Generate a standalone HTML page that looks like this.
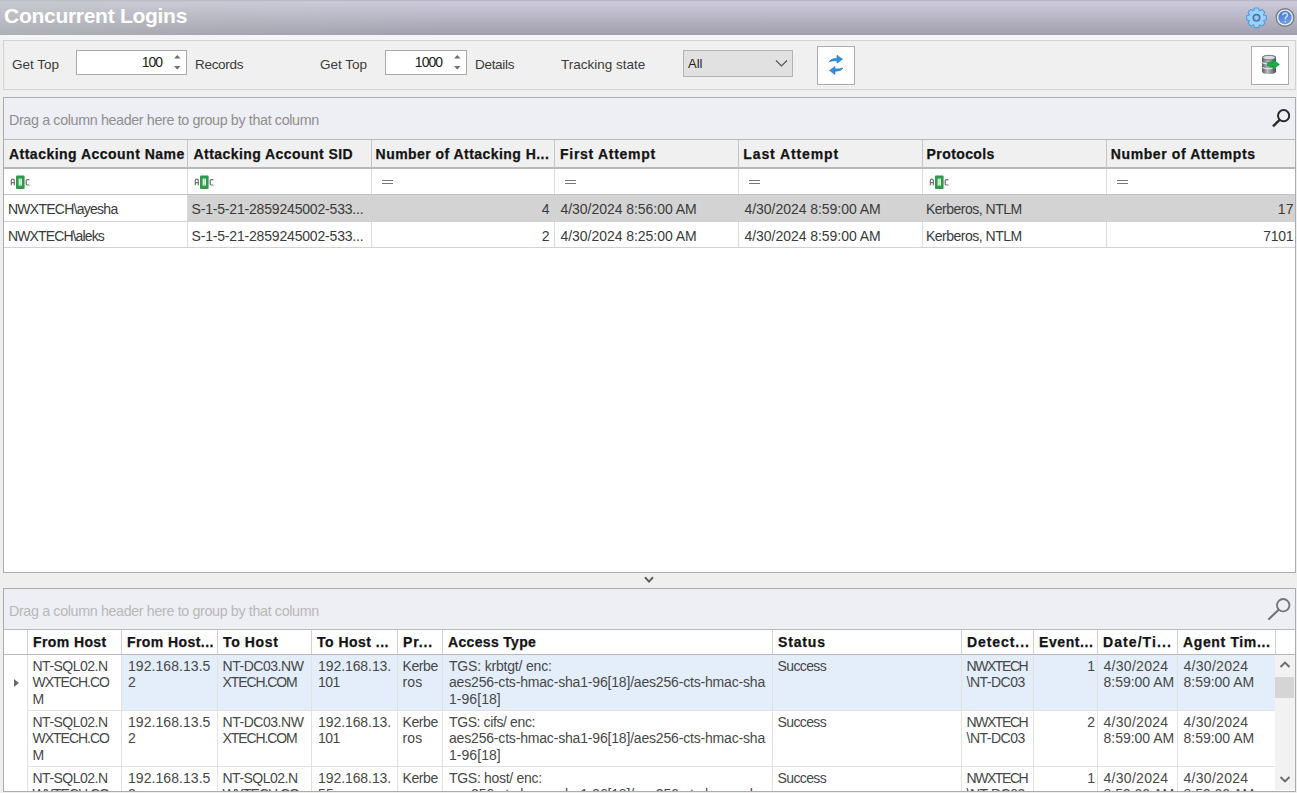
<!DOCTYPE html><html><head><meta charset="utf-8"><style>*{margin:0;padding:0;box-sizing:border-box}
html,body{width:1297px;height:793px;overflow:hidden;background:#efefef;font-family:"Liberation Sans",sans-serif}
.a{position:absolute}
#title{left:0;top:0;width:1297px;height:35px;background:linear-gradient(to right,rgba(190,198,192,0.45) 0,rgba(190,198,192,0.2) 200px,rgba(190,198,192,0) 450px),linear-gradient(#b3b2c0 0,#cccada 2px,#bdbbcb 14px,#a2a0ae 34px)}
#title .t{left:4px;top:4px;font-size:21px;letter-spacing:-0.28px;font-weight:bold;color:#fff;white-space:nowrap}
#strip{left:0;top:35px;width:1297px;height:5px;background:#f5f5f8}
#tb{left:3px;top:40px;width:1293px;height:50px;border:1px solid #d2d2d2;background:#f0f0f0}
.lbl{position:absolute;font-size:13.5px;color:#3a3a3a;white-space:nowrap}
.spin{position:absolute;background:#fff;border:1px solid #a9a9a9;height:25px}
.spin .v{position:absolute;right:24px;top:3px;font-size:14px;letter-spacing:-1px;color:#222}
.btn{position:absolute;background:#fff;border:1px solid #acacac;width:38px;height:39px}
.grid{position:absolute;border:1px solid #acacac;background:#fff}
.grp{position:absolute;background:#eeeef5}
.gt{position:absolute;left:5px;font-size:14.3px;letter-spacing:-0.36px;color:#9a9a9a;white-space:nowrap}
.h{position:absolute;font-size:14px;font-weight:bold;letter-spacing:0.4px;color:#141414;white-space:nowrap;overflow:hidden}
.d{position:absolute;font-size:13px;color:#3c3c3c;white-space:nowrap}
.d2{position:absolute;font-size:13.4px;line-height:16.3px;color:#555;white-space:pre}
.h2{position:absolute;font-size:14px;font-weight:bold;letter-spacing:0.3px;color:#141414;white-space:nowrap}
.abc{height:14px;font-size:0;white-space:nowrap}
.abc .l{display:inline-block;vertical-align:top;margin-top:3.5px;font-family:"Liberation Mono",monospace;font-size:8.5px;line-height:7px;color:#6a6a6a;font-weight:bold;width:4.5px;overflow:visible}
.abc .b{display:inline-block;vertical-align:top;width:9px;height:14px;background:#2d9b4c;margin:0 1px 0 0.5px;position:relative;border-radius:1px}
.abc .b i{position:absolute;left:3px;top:4px;width:3px;height:6px;background:#d8f0de}
.eq{width:11px;height:4px;border-top:1px solid #777;border-bottom:1px solid #777}
.tx{position:absolute;white-space:pre;line-height:normal}
</style></head><body>
<div id="title" class="a"><div class="a t">Concurrent Logins</div>
<svg class="a" style="left:1245px;top:6px" width="23" height="23" viewBox="0 0 23 23">
<path d="M8.61 4.77 L9.51 2.00 L13.49 2.00 L14.39 4.77 L14.43 4.79 L17.03 3.47 L19.83 6.27 L18.51 8.87 L18.53 8.91 L21.30 9.81 L21.30 13.79 L18.53 14.69 L18.51 14.73 L19.83 17.33 L17.03 20.13 L14.43 18.81 L14.39 18.83 L13.49 21.60 L9.51 21.60 L8.61 18.83 L8.57 18.81 L5.97 20.13 L3.17 17.33 L4.49 14.73 L4.47 14.69 L1.70 13.79 L1.70 9.81 L4.47 8.91 L4.49 8.87 L3.17 6.27 L5.97 3.47 L8.57 4.79 Z" fill="#9dd2f6" stroke="#4d9be0" stroke-width="1.1" stroke-linejoin="round"/>
<circle cx="11.5" cy="11.8" r="3.2" fill="#a9c4e2" stroke="#3b7cc4" stroke-width="1.7"/>
</svg>
<svg class="a" style="left:1274px;top:7px" width="22" height="22" viewBox="0 0 22 22">
<defs><linearGradient id="hb" x1="0" y1="0" x2="0.3" y2="1"><stop offset="0" stop-color="#3f73d4"/><stop offset="1" stop-color="#6f9be6"/></linearGradient></defs>
<circle cx="11" cy="10.5" r="9.5" fill="#777b7e"/>
<circle cx="11" cy="10.5" r="8.1" fill="#eaf0f8"/>
<circle cx="11" cy="10.5" r="6.7" fill="url(#hb)"/>
<path d="M8.6 8.3 Q8.8 5.9 11.2 5.9 Q13.5 6 13.4 8.1 Q13.3 9.5 11.6 10.4 L11.3 12.3" fill="none" stroke="#c9dbf8" stroke-width="1.5"/>
<circle cx="11.3" cy="14.6" r="0.95" fill="#c9dbf8"/>
</svg>
</div>
<div id="strip" class="a"></div>
<div id="tb" class="a"></div>
<div class="lbl" style="left:12px;top:57px">Get Top</div>
<div class="spin" style="left:76px;top:50px;width:111px"><div class="v">100</div>
<svg class="a" style="left:96px;top:3px" width="9" height="17" viewBox="0 0 9 17"><path d="M1 4.6 L4.3 1 L7.6 4.6 Z" fill="#707070"/><path d="M1 12 L4.3 15.6 L7.6 12 Z" fill="#707070"/></svg></div>
<div class="lbl" style="left:195px;top:57px;letter-spacing:-0.3px">Records</div>
<div class="lbl" style="left:320px;top:57px">Get Top</div>
<div class="spin" style="left:385px;top:50px;width:82px"><div class="v">1000</div>
<svg class="a" style="left:67px;top:3px" width="9" height="17" viewBox="0 0 9 17"><path d="M1 4.6 L4.3 1 L7.6 4.6 Z" fill="#707070"/><path d="M1 12 L4.3 15.6 L7.6 12 Z" fill="#707070"/></svg></div>
<div class="lbl" style="left:475px;top:57px;letter-spacing:-0.3px">Details</div>
<div class="lbl" style="left:561px;top:57px">Tracking state</div>
<div class="a" style="left:683px;top:50px;width:110px;height:27px;background:#e1e1e1;border:1px solid #b4b4b4"></div>
<div class="a" style="left:688px;top:56px;font-size:13px;color:#1e1e1e">All</div>
<svg class="a" style="left:775px;top:59px" width="13" height="9" viewBox="0 0 13 9"><path d="M1 1.5 L6.5 7 L12 1.5" fill="none" stroke="#555" stroke-width="1.2"/></svg>
<div class="btn" style="left:817px;top:46px"></div>
<svg class="a" style="left:826px;top:53px" width="20" height="24" viewBox="0 0 20 24">
<path transform="translate(0,-0.8)" d="M3 9.5 Q5 6 11 6.2 L11 3 L16.5 7 L11 11 L11 8.6 Q6.5 8.3 3 9.5 Z" fill="#2f8fdc" stroke="#1f78c8" stroke-width="0.6"/>
<path transform="translate(0,0.5)" d="M17 14.5 Q15 18 9 17.8 L9 21 L3.5 17 L9 13 L9 15.4 Q13.5 15.7 17 14.5 Z" fill="#2f8fdc" stroke="#1f78c8" stroke-width="0.6"/>
</svg>
<div class="btn" style="left:1251px;top:46px"></div>
<svg class="a" style="left:1259px;top:53px" width="24" height="24" viewBox="0 0 24 24">
<defs><linearGradient id="dbg" x1="0" x2="1"><stop offset="0" stop-color="#585e60"/><stop offset="0.4" stop-color="#b9bebf"/><stop offset="1" stop-color="#4a5052"/></linearGradient></defs>
<path d="M3 4.5 Q3 2 10 2 Q17 2 17 4.5 L17 18.5 Q17 21 10 21 Q3 21 3 18.5 Z" fill="url(#dbg)"/>
<ellipse cx="10" cy="4.6" rx="6.3" ry="2.3" fill="#d9dcdd" stroke="#6a7072" stroke-width="0.9"/>
<path d="M3.2 9.8 Q10 12.2 16.8 9.8 M3.2 14.6 Q10 17 16.8 14.6" fill="none" stroke="#e4e8e8" stroke-width="1.1"/>
<path d="M8.3 9.6 L14 9.6 L14 6.3 L20.4 11.4 L14 16.5 L14 13.2 L8.3 13.2 Z" fill="#17b043" stroke="#0b7f2c" stroke-width="0.5"/>
</svg>
<div class="grid" style="left:3px;top:97px;width:1293px;height:476px"></div>
<div class="grp" style="left:4px;top:98px;width:1291px;height:41px"><div class="gt" style="top:14px;color:#8e8e8e">Drag a column header here to group by that column</div>
<svg class="a" style="left:1264px;top:8px" width="22" height="22" viewBox="0 0 22 22"><circle cx="15.6" cy="9.7" r="5.6" fill="none" stroke="#2b2b2b" stroke-width="2"/><path d="M11.6 13.8 L5 20.4" stroke="#2b2b2b" stroke-width="2.4"/></svg>
</div>

<div class="a" style="left:4px;top:140px;width:1291px;height:28px;background:#f0f0f0"></div>
<div class="a" style="left:4px;top:139px;width:1291px;height:1px;background:#b9b9b9"></div>
<div class="a" style="left:4px;top:167px;width:1291px;height:2px;background:#b8b8b8"></div>
<div class="a" style="left:4px;top:194px;width:1291px;height:1px;background:#c2c2c2"></div>
<div class="a" style="left:187px;top:195px;width:1108px;height:27px;background:#d3d3d3"></div>
<div class="a" style="left:4px;top:221px;width:1291px;height:1px;background:#d2d2d2"></div>
<div class="a" style="left:4px;top:247px;width:1291px;height:1px;background:#d2d2d2"></div>
<div class="a" style="left:187px;top:140px;width:1px;height:28px;background:#c4c4c4"></div>
<div class="a" style="left:187px;top:169px;width:1px;height:25px;background:#dcdcdc"></div>
<div class="a" style="left:187px;top:222px;width:1px;height:25px;background:#dcdcdc"></div>
<div class="a" style="left:187px;top:195px;width:1px;height:26px;background:#dcdcdc"></div>
<div class="a" style="left:371px;top:140px;width:1px;height:28px;background:#c4c4c4"></div>
<div class="a" style="left:371px;top:169px;width:1px;height:25px;background:#dcdcdc"></div>
<div class="a" style="left:371px;top:222px;width:1px;height:25px;background:#dcdcdc"></div>
<div class="a" style="left:554px;top:140px;width:1px;height:28px;background:#c4c4c4"></div>
<div class="a" style="left:554px;top:169px;width:1px;height:25px;background:#dcdcdc"></div>
<div class="a" style="left:554px;top:222px;width:1px;height:25px;background:#dcdcdc"></div>
<div class="a" style="left:738px;top:140px;width:1px;height:28px;background:#c4c4c4"></div>
<div class="a" style="left:738px;top:169px;width:1px;height:25px;background:#dcdcdc"></div>
<div class="a" style="left:738px;top:222px;width:1px;height:25px;background:#dcdcdc"></div>
<div class="a" style="left:922px;top:140px;width:1px;height:28px;background:#c4c4c4"></div>
<div class="a" style="left:922px;top:169px;width:1px;height:25px;background:#dcdcdc"></div>
<div class="a" style="left:922px;top:222px;width:1px;height:25px;background:#dcdcdc"></div>
<div class="a" style="left:1106px;top:140px;width:1px;height:28px;background:#c4c4c4"></div>
<div class="a" style="left:1106px;top:169px;width:1px;height:25px;background:#dcdcdc"></div>
<div class="a" style="left:1106px;top:222px;width:1px;height:25px;background:#dcdcdc"></div>
<svg class="a" style="left:9.5px;top:175px" width="22" height="15" viewBox="0 0 22 15"><path d="M1.3 10.2 L1.3 5.6 Q1.3 4.2 2.8 4.2 Q4.3 4.2 4.3 5.6 L4.3 10.2 M1.3 7.6 L4.3 7.6" fill="none" stroke="#707070" stroke-width="1.2"/><rect x="6" y="0.5" width="8.6" height="13.5" rx="1" fill="#2e9a4c"/><rect x="8.6" y="3.6" width="3.4" height="7" fill="#dff2e4"/><path d="M9.6 5 L10.8 5 M9.6 7.3 L10.8 7.3 M9.6 9.4 L10.8 9.4" stroke="#7cc594" stroke-width="0.9"/><path d="M19.4 4.6 L17.4 4.6 Q16.2 4.6 16.2 5.8 L16.2 8.8 Q16.2 10 17.4 10 L19.4 10" fill="none" stroke="#707070" stroke-width="1.2"/></svg>
<svg class="a" style="left:193.5px;top:175px" width="22" height="15" viewBox="0 0 22 15"><path d="M1.3 10.2 L1.3 5.6 Q1.3 4.2 2.8 4.2 Q4.3 4.2 4.3 5.6 L4.3 10.2 M1.3 7.6 L4.3 7.6" fill="none" stroke="#707070" stroke-width="1.2"/><rect x="6" y="0.5" width="8.6" height="13.5" rx="1" fill="#2e9a4c"/><rect x="8.6" y="3.6" width="3.4" height="7" fill="#dff2e4"/><path d="M9.6 5 L10.8 5 M9.6 7.3 L10.8 7.3 M9.6 9.4 L10.8 9.4" stroke="#7cc594" stroke-width="0.9"/><path d="M19.4 4.6 L17.4 4.6 Q16.2 4.6 16.2 5.8 L16.2 8.8 Q16.2 10 17.4 10 L19.4 10" fill="none" stroke="#707070" stroke-width="1.2"/></svg>
<div class="a eq" style="left:382px;top:180px"></div>
<div class="a eq" style="left:565px;top:180px"></div>
<div class="a eq" style="left:749px;top:180px"></div>
<svg class="a" style="left:928.5px;top:175px" width="22" height="15" viewBox="0 0 22 15"><path d="M1.3 10.2 L1.3 5.6 Q1.3 4.2 2.8 4.2 Q4.3 4.2 4.3 5.6 L4.3 10.2 M1.3 7.6 L4.3 7.6" fill="none" stroke="#707070" stroke-width="1.2"/><rect x="6" y="0.5" width="8.6" height="13.5" rx="1" fill="#2e9a4c"/><rect x="8.6" y="3.6" width="3.4" height="7" fill="#dff2e4"/><path d="M9.6 5 L10.8 5 M9.6 7.3 L10.8 7.3 M9.6 9.4 L10.8 9.4" stroke="#7cc594" stroke-width="0.9"/><path d="M19.4 4.6 L17.4 4.6 Q16.2 4.6 16.2 5.8 L16.2 8.8 Q16.2 10 17.4 10 L19.4 10" fill="none" stroke="#707070" stroke-width="1.2"/></svg>
<div class="a eq" style="left:1117px;top:180px"></div>
<div class="tx" style="font-size:14px;font-weight:bold;color:#141414;letter-spacing:0.477px;top:146.0px;-webkit-text-stroke:0.25px #141414;left:9px;">Attacking Account Name</div>
<div class="tx" style="font-size:14px;font-weight:bold;color:#141414;letter-spacing:0.440px;top:146.0px;-webkit-text-stroke:0.25px #141414;left:193.5px;">Attacking Account SID</div>
<div class="tx" style="font-size:14px;font-weight:bold;color:#141414;letter-spacing:0.451px;top:146.0px;-webkit-text-stroke:0.25px #141414;left:375.6px;">Number of Attacking H...</div>
<div class="tx" style="font-size:14px;font-weight:bold;color:#141414;letter-spacing:0.717px;top:146.0px;-webkit-text-stroke:0.25px #141414;left:560px;">First Attempt</div>
<div class="tx" style="font-size:14px;font-weight:bold;color:#141414;letter-spacing:0.887px;top:146.0px;-webkit-text-stroke:0.25px #141414;left:743.3px;">Last Attempt</div>
<div class="tx" style="font-size:14px;font-weight:bold;color:#141414;letter-spacing:0.403px;top:146.0px;-webkit-text-stroke:0.25px #141414;left:926.6px;">Protocols</div>
<div class="tx" style="font-size:14px;font-weight:bold;color:#141414;letter-spacing:0.597px;top:146.0px;-webkit-text-stroke:0.25px #141414;left:1110.8px;">Number of Attempts</div>
<div class="tx" style="font-size:14px;font-weight:normal;color:#3a3a3a;letter-spacing:-0.739px;top:201.0px;left:8px;">NWXTECH\ayesha</div>
<div class="tx" style="font-size:14px;font-weight:normal;color:#3a3a3a;letter-spacing:-0.180px;top:201.0px;left:191.5px;">S-1-5-21-2859245002-533...</div>
<div class="tx" style="font-size:14px;font-weight:normal;color:#3a3a3a;letter-spacing:0.000px;top:201.0px;left:541.70px;">4</div>
<div class="tx" style="font-size:14px;font-weight:normal;color:#3a3a3a;letter-spacing:-0.042px;top:201.0px;left:560.5px;">4/30/2024 8:56:00 AM</div>
<div class="tx" style="font-size:14px;font-weight:normal;color:#3a3a3a;letter-spacing:-0.042px;top:201.0px;left:744.5px;">4/30/2024 8:59:00 AM</div>
<div class="tx" style="font-size:14px;font-weight:normal;color:#3a3a3a;letter-spacing:-0.500px;top:201.0px;left:926px;">Kerberos, NTLM</div>
<div class="tx" style="font-size:14px;font-weight:normal;color:#3a3a3a;letter-spacing:0.100px;top:201.0px;left:1277.82px;">17</div>
<div class="tx" style="font-size:14px;font-weight:normal;color:#3a3a3a;letter-spacing:-0.880px;top:228.0px;left:8px;">NWXTECH\aleks</div>
<div class="tx" style="font-size:14px;font-weight:normal;color:#3a3a3a;letter-spacing:-0.180px;top:228.0px;left:191.5px;">S-1-5-21-2859245002-533...</div>
<div class="tx" style="font-size:14px;font-weight:normal;color:#3a3a3a;letter-spacing:0.000px;top:228.0px;left:541.70px;">2</div>
<div class="tx" style="font-size:14px;font-weight:normal;color:#3a3a3a;letter-spacing:-0.042px;top:228.0px;left:560.5px;">4/30/2024 8:25:00 AM</div>
<div class="tx" style="font-size:14px;font-weight:normal;color:#3a3a3a;letter-spacing:-0.042px;top:228.0px;left:744.5px;">4/30/2024 8:59:00 AM</div>
<div class="tx" style="font-size:14px;font-weight:normal;color:#3a3a3a;letter-spacing:-0.500px;top:228.0px;left:926px;">Kerberos, NTLM</div>
<div class="tx" style="font-size:14px;font-weight:normal;color:#3a3a3a;letter-spacing:-0.319px;top:228.0px;left:1263.30px;">7101</div>
<svg class="a" style="left:643px;top:575px" width="12" height="10" viewBox="0 0 12 10"><path d="M2 2.3 L6 6.6 L10 2.3" fill="none" stroke="#5e5e5e" stroke-width="2"/></svg>
<div class="grid" style="left:3px;top:588px;width:1293px;height:204px"></div>
<div class="grp" style="left:4px;top:589px;width:1291px;height:40px"><div class="gt" style="top:13.5px;color:#b8b8b8">Drag a column header here to group by that column</div>
<svg class="a" style="left:1262px;top:7px" width="26" height="26" viewBox="0 0 26 26"><circle cx="17.2" cy="9.2" r="6.2" fill="none" stroke="#747474" stroke-width="1.8"/><path d="M12.4 13.9 L3 22.9" stroke="#747474" stroke-width="2.1" stroke-linecap="round"/></svg>
</div>

<div class="a" style="left:4px;top:629px;width:1291px;height:162px;overflow:hidden;background:#fff">
<div class="a" style="left:117px;top:26px;width:1154px;height:55px;background:#e3eefa"></div>
<div class="a" style="left:0px;top:0px;width:1291px;height:1px;background:#b9b9b9"></div>
<div class="a" style="left:0px;top:25px;width:1291px;height:1px;background:#b9b9b9"></div>
<div class="a" style="left:24px;top:81px;width:1247px;height:1px;background:#e2e2e2"></div>
<div class="a" style="left:24px;top:137px;width:1247px;height:1px;background:#e2e2e2"></div>
<div class="a" style="left:23px;top:1px;width:1px;height:24px;background:#d2d2d2"></div>
<div class="a" style="left:23px;top:26px;width:1px;height:137px;background:#e2e2e2"></div>
<div class="a" style="left:117px;top:1px;width:1px;height:24px;background:#d2d2d2"></div>
<div class="a" style="left:117px;top:26px;width:1px;height:137px;background:#e2e2e2"></div>
<div class="a" style="left:213px;top:1px;width:1px;height:24px;background:#d2d2d2"></div>
<div class="a" style="left:213px;top:26px;width:1px;height:137px;background:#e2e2e2"></div>
<div class="a" style="left:307px;top:1px;width:1px;height:24px;background:#d2d2d2"></div>
<div class="a" style="left:307px;top:26px;width:1px;height:137px;background:#e2e2e2"></div>
<div class="a" style="left:393px;top:1px;width:1px;height:24px;background:#d2d2d2"></div>
<div class="a" style="left:393px;top:26px;width:1px;height:137px;background:#e2e2e2"></div>
<div class="a" style="left:438px;top:1px;width:1px;height:24px;background:#d2d2d2"></div>
<div class="a" style="left:438px;top:26px;width:1px;height:137px;background:#e2e2e2"></div>
<div class="a" style="left:768px;top:1px;width:1px;height:24px;background:#d2d2d2"></div>
<div class="a" style="left:768px;top:26px;width:1px;height:137px;background:#e2e2e2"></div>
<div class="a" style="left:957px;top:1px;width:1px;height:24px;background:#d2d2d2"></div>
<div class="a" style="left:957px;top:26px;width:1px;height:137px;background:#e2e2e2"></div>
<div class="a" style="left:1029px;top:1px;width:1px;height:24px;background:#d2d2d2"></div>
<div class="a" style="left:1029px;top:26px;width:1px;height:137px;background:#e2e2e2"></div>
<div class="a" style="left:1093px;top:1px;width:1px;height:24px;background:#d2d2d2"></div>
<div class="a" style="left:1093px;top:26px;width:1px;height:137px;background:#e2e2e2"></div>
<div class="a" style="left:1173px;top:1px;width:1px;height:24px;background:#d2d2d2"></div>
<div class="a" style="left:1173px;top:26px;width:1px;height:137px;background:#e2e2e2"></div>
<div class="a" style="left:1271px;top:1px;width:1px;height:24px;background:#d2d2d2"></div>
<div class="tx" style="font-size:14px;font-weight:bold;color:#141414;letter-spacing:0.400px;top:5.0px;-webkit-text-stroke:0.25px #141414;left:29px;">From Host</div>
<div class="tx" style="font-size:14px;font-weight:bold;color:#141414;letter-spacing:0.430px;top:5.0px;-webkit-text-stroke:0.25px #141414;left:123px;">From Host...</div>
<div class="tx" style="font-size:14px;font-weight:bold;color:#141414;letter-spacing:0.637px;top:5.0px;-webkit-text-stroke:0.25px #141414;left:219px;">To Host</div>
<div class="tx" style="font-size:14px;font-weight:bold;color:#141414;letter-spacing:0.487px;top:5.0px;-webkit-text-stroke:0.25px #141414;left:313px;">To Host ...</div>
<div class="tx" style="font-size:14px;font-weight:bold;color:#141414;letter-spacing:0.878px;top:5.0px;-webkit-text-stroke:0.25px #141414;left:399px;">Pr...</div>
<div class="tx" style="font-size:14px;font-weight:bold;color:#141414;letter-spacing:0.332px;top:5.0px;-webkit-text-stroke:0.25px #141414;left:444px;">Access Type</div>
<div class="tx" style="font-size:14px;font-weight:bold;color:#141414;letter-spacing:0.841px;top:5.0px;-webkit-text-stroke:0.25px #141414;left:774px;">Status</div>
<div class="tx" style="font-size:14px;font-weight:bold;color:#141414;letter-spacing:0.929px;top:5.0px;-webkit-text-stroke:0.25px #141414;left:963px;">Detect...</div>
<div class="tx" style="font-size:14px;font-weight:bold;color:#141414;letter-spacing:0.600px;top:5.0px;-webkit-text-stroke:0.25px #141414;left:1035px;">Event...</div>
<div class="tx" style="font-size:14px;font-weight:bold;color:#141414;letter-spacing:1.078px;top:5.0px;-webkit-text-stroke:0.25px #141414;left:1099px;">Date/Ti...</div>
<div class="tx" style="font-size:14px;font-weight:bold;color:#141414;letter-spacing:0.640px;top:5.0px;-webkit-text-stroke:0.25px #141414;left:1179px;">Agent Tim...</div>
<div class="tx" style="font-size:14px;font-weight:normal;color:#474747;letter-spacing:-0.505px;top:28.5px;left:28.5px;">NT-SQL02.N</div>
<div class="tx" style="font-size:14px;font-weight:normal;color:#474747;letter-spacing:-1.008px;top:45.0px;left:28.5px;">WXTECH.CO</div>
<div class="tx" style="font-size:14px;font-weight:normal;color:#474747;letter-spacing:0.000px;top:61.5px;left:28.5px;">M</div>
<div class="tx" style="font-size:14px;font-weight:normal;color:#474747;letter-spacing:0.059px;top:28.5px;left:124px;">192.168.13.5</div>
<div class="tx" style="font-size:14px;font-weight:normal;color:#474747;letter-spacing:0.000px;top:45.0px;left:124px;">2</div>
<div class="tx" style="font-size:14px;font-weight:normal;color:#474747;letter-spacing:-0.462px;top:28.5px;left:218.5px;">NT-DC03.NW</div>
<div class="tx" style="font-size:14px;font-weight:normal;color:#474747;letter-spacing:-1.100px;top:45.0px;left:218.5px;">XTECH.COM</div>
<div class="tx" style="font-size:14px;font-weight:normal;color:#474747;letter-spacing:-0.077px;top:28.5px;left:314px;">192.168.13.</div>
<div class="tx" style="font-size:14px;font-weight:normal;color:#474747;letter-spacing:-0.580px;top:45.0px;left:314px;">101</div>
<div class="tx" style="font-size:14px;font-weight:normal;color:#474747;letter-spacing:-0.390px;top:28.5px;left:398.5px;">Kerbe</div>
<div class="tx" style="font-size:14px;font-weight:normal;color:#474747;letter-spacing:0.123px;top:45.0px;left:398.5px;">ros</div>
<div class="tx" style="font-size:14px;font-weight:normal;color:#474747;letter-spacing:-0.183px;top:28.5px;left:445px;">TGS: krbtgt/ enc:</div>
<div class="tx" style="font-size:14px;font-weight:normal;color:#474747;letter-spacing:-0.180px;top:45.0px;left:445px;">aes256-cts-hmac-sha1-96[18]/aes256-cts-hmac-sha</div>
<div class="tx" style="font-size:14px;font-weight:normal;color:#474747;letter-spacing:0.046px;top:61.5px;left:445px;">1-96[18]</div>
<div class="tx" style="font-size:14px;font-weight:normal;color:#474747;letter-spacing:-0.620px;top:28.5px;left:773.5px;">Success</div>
<div class="tx" style="font-size:14px;font-weight:normal;color:#474747;letter-spacing:-1.430px;top:28.5px;left:962.5px;">NWXTECH</div>
<div class="tx" style="font-size:14px;font-weight:normal;color:#474747;letter-spacing:-0.505px;top:45.0px;left:962.5px;">\NT-DC03</div>
<div class="tx" style="font-size:14px;font-weight:normal;color:#474747;letter-spacing:0.000px;top:28.5px;left:1083.20px;">1</div>
<div class="tx" style="font-size:14px;font-weight:normal;color:#474747;letter-spacing:0.288px;top:28.5px;left:1099.5px;">4/30/2024</div>
<div class="tx" style="font-size:14px;font-weight:normal;color:#474747;letter-spacing:-0.025px;top:45.0px;left:1099.5px;">8:59:00 AM</div>
<div class="tx" style="font-size:14px;font-weight:normal;color:#474747;letter-spacing:0.288px;top:28.5px;left:1179.5px;">4/30/2024</div>
<div class="tx" style="font-size:14px;font-weight:normal;color:#474747;letter-spacing:-0.025px;top:45.0px;left:1179.5px;">8:59:00 AM</div>
<div class="tx" style="font-size:14px;font-weight:normal;color:#474747;letter-spacing:-0.505px;top:84.5px;left:28.5px;">NT-SQL02.N</div>
<div class="tx" style="font-size:14px;font-weight:normal;color:#474747;letter-spacing:-1.008px;top:101.0px;left:28.5px;">WXTECH.CO</div>
<div class="tx" style="font-size:14px;font-weight:normal;color:#474747;letter-spacing:0.000px;top:117.5px;left:28.5px;">M</div>
<div class="tx" style="font-size:14px;font-weight:normal;color:#474747;letter-spacing:0.059px;top:84.5px;left:124px;">192.168.13.5</div>
<div class="tx" style="font-size:14px;font-weight:normal;color:#474747;letter-spacing:0.000px;top:101.0px;left:124px;">2</div>
<div class="tx" style="font-size:14px;font-weight:normal;color:#474747;letter-spacing:-0.462px;top:84.5px;left:218.5px;">NT-DC03.NW</div>
<div class="tx" style="font-size:14px;font-weight:normal;color:#474747;letter-spacing:-1.100px;top:101.0px;left:218.5px;">XTECH.COM</div>
<div class="tx" style="font-size:14px;font-weight:normal;color:#474747;letter-spacing:-0.077px;top:84.5px;left:314px;">192.168.13.</div>
<div class="tx" style="font-size:14px;font-weight:normal;color:#474747;letter-spacing:-0.580px;top:101.0px;left:314px;">101</div>
<div class="tx" style="font-size:14px;font-weight:normal;color:#474747;letter-spacing:-0.390px;top:84.5px;left:398.5px;">Kerbe</div>
<div class="tx" style="font-size:14px;font-weight:normal;color:#474747;letter-spacing:0.123px;top:101.0px;left:398.5px;">ros</div>
<div class="tx" style="font-size:14px;font-weight:normal;color:#474747;letter-spacing:-0.387px;top:84.5px;left:445px;">TGS: cifs/ enc:</div>
<div class="tx" style="font-size:14px;font-weight:normal;color:#474747;letter-spacing:-0.180px;top:101.0px;left:445px;">aes256-cts-hmac-sha1-96[18]/aes256-cts-hmac-sha</div>
<div class="tx" style="font-size:14px;font-weight:normal;color:#474747;letter-spacing:0.046px;top:117.5px;left:445px;">1-96[18]</div>
<div class="tx" style="font-size:14px;font-weight:normal;color:#474747;letter-spacing:-0.620px;top:84.5px;left:773.5px;">Success</div>
<div class="tx" style="font-size:14px;font-weight:normal;color:#474747;letter-spacing:-1.430px;top:84.5px;left:962.5px;">NWXTECH</div>
<div class="tx" style="font-size:14px;font-weight:normal;color:#474747;letter-spacing:-0.505px;top:101.0px;left:962.5px;">\NT-DC03</div>
<div class="tx" style="font-size:14px;font-weight:normal;color:#474747;letter-spacing:0.000px;top:84.5px;left:1083.20px;">2</div>
<div class="tx" style="font-size:14px;font-weight:normal;color:#474747;letter-spacing:0.288px;top:84.5px;left:1099.5px;">4/30/2024</div>
<div class="tx" style="font-size:14px;font-weight:normal;color:#474747;letter-spacing:-0.025px;top:101.0px;left:1099.5px;">8:59:00 AM</div>
<div class="tx" style="font-size:14px;font-weight:normal;color:#474747;letter-spacing:0.288px;top:84.5px;left:1179.5px;">4/30/2024</div>
<div class="tx" style="font-size:14px;font-weight:normal;color:#474747;letter-spacing:-0.025px;top:101.0px;left:1179.5px;">8:59:00 AM</div>
<div class="tx" style="font-size:14px;font-weight:normal;color:#474747;letter-spacing:-0.505px;top:140.5px;left:28.5px;">NT-SQL02.N</div>
<div class="tx" style="font-size:14px;font-weight:normal;color:#474747;letter-spacing:-1.008px;top:157.0px;left:28.5px;">WXTECH.CO</div>
<div class="tx" style="font-size:14px;font-weight:normal;color:#474747;letter-spacing:0.000px;top:173.5px;left:28.5px;">M</div>
<div class="tx" style="font-size:14px;font-weight:normal;color:#474747;letter-spacing:0.059px;top:140.5px;left:124px;">192.168.13.5</div>
<div class="tx" style="font-size:14px;font-weight:normal;color:#474747;letter-spacing:0.000px;top:157.0px;left:124px;">2</div>
<div class="tx" style="font-size:14px;font-weight:normal;color:#474747;letter-spacing:-0.505px;top:140.5px;left:218.5px;">NT-SQL02.N</div>
<div class="tx" style="font-size:14px;font-weight:normal;color:#474747;letter-spacing:-1.008px;top:157.0px;left:218.5px;">WXTECH.CO</div>
<div class="tx" style="font-size:14px;font-weight:normal;color:#474747;letter-spacing:0.000px;top:173.5px;left:218.5px;">M</div>
<div class="tx" style="font-size:14px;font-weight:normal;color:#474747;letter-spacing:-0.077px;top:140.5px;left:314px;">192.168.13.</div>
<div class="tx" style="font-size:14px;font-weight:normal;color:#474747;letter-spacing:0.100px;top:157.0px;left:314px;">55</div>
<div class="tx" style="font-size:14px;font-weight:normal;color:#474747;letter-spacing:-0.390px;top:140.5px;left:398.5px;">Kerbe</div>
<div class="tx" style="font-size:14px;font-weight:normal;color:#474747;letter-spacing:0.123px;top:157.0px;left:398.5px;">ros</div>
<div class="tx" style="font-size:14px;font-weight:normal;color:#474747;letter-spacing:-0.300px;top:140.5px;left:445px;">TGS: host/ enc:</div>
<div class="tx" style="font-size:14px;font-weight:normal;color:#474747;letter-spacing:-0.180px;top:157.0px;left:445px;">aes256-cts-hmac-sha1-96[18]/aes256-cts-hmac-sha</div>
<div class="tx" style="font-size:14px;font-weight:normal;color:#474747;letter-spacing:0.046px;top:173.5px;left:445px;">1-96[18]</div>
<div class="tx" style="font-size:14px;font-weight:normal;color:#474747;letter-spacing:-0.620px;top:140.5px;left:773.5px;">Success</div>
<div class="tx" style="font-size:14px;font-weight:normal;color:#474747;letter-spacing:-1.430px;top:140.5px;left:962.5px;">NWXTECH</div>
<div class="tx" style="font-size:14px;font-weight:normal;color:#474747;letter-spacing:-0.505px;top:157.0px;left:962.5px;">\NT-DC03</div>
<div class="tx" style="font-size:14px;font-weight:normal;color:#474747;letter-spacing:0.000px;top:140.5px;left:1083.20px;">1</div>
<div class="tx" style="font-size:14px;font-weight:normal;color:#474747;letter-spacing:0.288px;top:140.5px;left:1099.5px;">4/30/2024</div>
<div class="tx" style="font-size:14px;font-weight:normal;color:#474747;letter-spacing:-0.025px;top:157.0px;left:1099.5px;">8:59:00 AM</div>
<div class="tx" style="font-size:14px;font-weight:normal;color:#474747;letter-spacing:0.288px;top:140.5px;left:1179.5px;">4/30/2024</div>
<div class="tx" style="font-size:14px;font-weight:normal;color:#474747;letter-spacing:-0.025px;top:157.0px;left:1179.5px;">8:59:00 AM</div>
<div class="a" style="left:10px;top:50px;width:0;height:0;border-top:4.5px solid transparent;border-bottom:4.5px solid transparent;border-left:5px solid #6b6b6b"></div>
</div>
<div class="a" style="left:1275px;top:655px;width:20px;height:135px;background:#f2f2f3"></div>
<svg class="a" style="left:1278px;top:660px" width="14" height="10" viewBox="0 0 14 10"><path d="M2.5 7 L7 2.5 L11.5 7" fill="none" stroke="#6a6a6a" stroke-width="1.9"/></svg>
<div class="a" style="left:1275px;top:677px;width:19px;height:21px;background:#d5d5d5"></div>
<svg class="a" style="left:1278px;top:774px" width="14" height="10" viewBox="0 0 14 10"><path d="M2.5 3 L7 7.5 L11.5 3" fill="none" stroke="#6a6a6a" stroke-width="1.9"/></svg>

</body></html>
